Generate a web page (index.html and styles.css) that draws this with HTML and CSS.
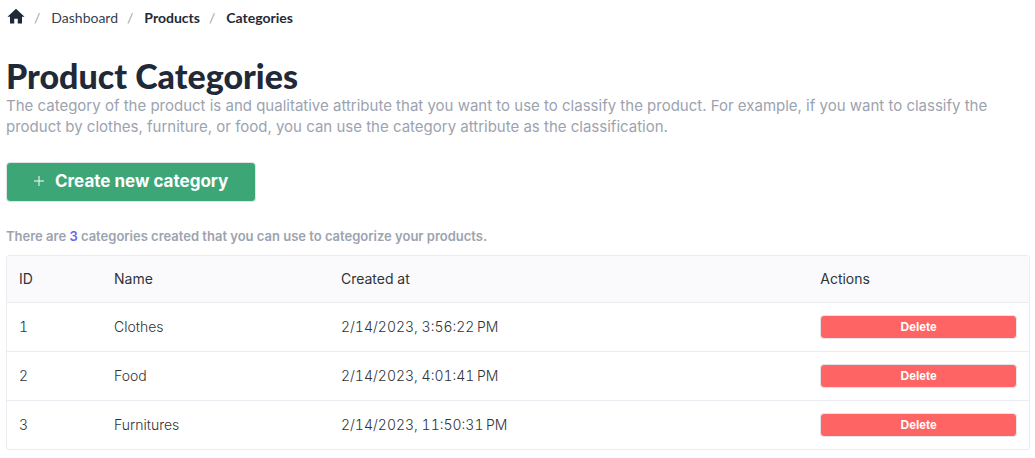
FILE: index.html
```html
<!DOCTYPE html>
<html lang="en">
<head>
<meta charset="utf-8">
<title>Product Categories</title>
<link rel="stylesheet" href="styles.css">
</head>
<body>
<main class="page">
  <nav class="breadcrumb" aria-label="Breadcrumb">
    <a class="crumb home" href="#" aria-label="Home"><svg class="home-icon" viewBox="0 0 24 24" aria-hidden="true"><path d="M12 1 0 12.500h3.500V22h6v-7h5v7h6v-9.500H24z"/></svg></a>
    <span class="slash">/</span>
    <a class="crumb" href="#">Dashboard</a>
    <span class="slash">/</span>
    <a class="crumb strong" href="#">Products</a>
    <span class="slash">/</span>
    <a class="crumb strong" href="#" aria-current="page">Categories</a>
  </nav>
  <h1 class="title">Product Categories</h1>
  <p class="lead">The category of the product is and qualitative attribute that you want to use to classify the product. For example, if you want to classify the product by clothes, furniture, or food, you can use the category attribute as the classification.</p>
  <button class="create" type="button"><svg class="plus" viewBox="0 0 10 10" aria-hidden="true"><path d="M5 0v10M0 5h10"/></svg>Create new category</button>
  <p class="summary">There are <span class="count">3</span> categories created that you can use to categorize your products.</p>
  <div class="table-wrap">
    <table class="table">
      <colgroup><col class="col-id"><col class="col-name"><col class="col-date"><col class="col-actions"></colgroup>
      <thead><tr><th scope="col">ID</th><th scope="col">Name</th><th scope="col">Created at</th><th scope="col">Actions</th></tr></thead>
      <tbody>
        <tr><td>1</td><td>Clothes</td><td>2/14/2023, 3:56:22&#8239;PM</td><td><button class="delete" type="button">Delete</button></td></tr>
        <tr><td>2</td><td>Food</td><td>2/14/2023, 4:01:41&#8239;PM</td><td><button class="delete" type="button">Delete</button></td></tr>
        <tr><td>3</td><td>Furnitures</td><td>2/14/2023, 11:50:31&#8239;PM</td><td><button class="delete" type="button">Delete</button></td></tr>
      </tbody>
    </table>
  </div>
</main>
</body>
</html>
```
FILE: styles.css
```css
* { box-sizing: border-box; }
body { margin: 0; background: #fff; color: #1f2937; font-family: Inter, sans-serif; }
.page { padding: 6px 5px 8px 6px; }
.breadcrumb { display: flex; align-items: center; height: 24px; font: 14px/24px Lato, sans-serif; }
.crumb { color: #374151; text-decoration: none; }
.strong { color: #1f2937; font-weight: 700; }
.home { display: flex; margin: 0 0 4px 1px; }
.home-icon { width: 18px; height: 17px; fill: #1f2937; }
.slash { margin: 0 11px 0 9px; color: #9ca3af; }
.title { margin: 26px 0 0; font: 900 34px/40px Lato, sans-serif; color: #1f2937; }
.lead { margin: -1px 0 0; font: 15px/21px Inter, sans-serif; color: #9ca3af; }
.create { display: flex; align-items: center; gap: 11px; margin: 25px 0 0; padding: 0 27px 2px 27px; height: 40px; border: 1px solid #dfe5e9; border-radius: 4px; background: #3da676; color: #fff; font: 700 17px/24px Inter, sans-serif; }
.plus { width: 10px; height: 10px; fill: none; stroke: #fff; }
.summary { margin: 24px 0 9px; font: 600 13px/20px Inter, sans-serif; color: #9ca3af; }
.count { color: #6366f1; }
.table-wrap { border: 1px solid #ebebf2; border-radius: 3px; overflow: hidden; }
.table { width: 100%; table-layout: fixed; border-collapse: collapse; font: 14px/20px Inter, sans-serif; font-variant-numeric: tabular-nums; color: #303338; }
.col-id { width: 9.3%; }
.col-name { width: 22.2%; }
.col-date { width: 46.9%; }
.col-actions { width: 21.6%; }
.table th { height: 46px; padding: 0 12px; text-align: left; font-weight: 400; background: #fafafc; }
.table td { height: 49px; padding: 0 12px; border-top: 1px solid #ebebf2; color: #303338; font-weight: 300; }
.delete { display: block; width: 100%; height: 24px; padding: 0; border: 1px solid #e2e5ea; border-radius: 4px; background: #ff6464; color: #fff; font: 700 12px/20px "Liberation Sans", sans-serif; }
```
